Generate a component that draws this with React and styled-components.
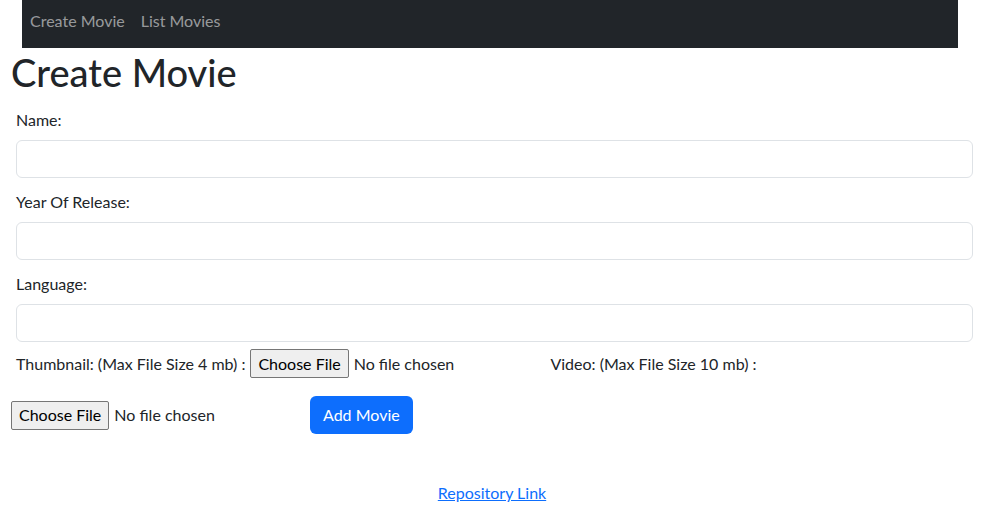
import React from 'react';
import styled, { createGlobalStyle } from 'styled-components';

const GlobalStyle = createGlobalStyle`
  body {
    margin: 0;
    background: #fff;
    color: #212529;
    font-family: Lato, "Liberation Sans", sans-serif;
    font-size: 16px;
    line-height: 1.5;
  }
  * {
    box-sizing: border-box;
  }
`;

function FilePicker({ spacing = 46 }) {
  return (
    <Picker $spacing={spacing}>
      <PickButton type="button">Choose File</PickButton>
      <span>No file chosen</span>
    </Picker>
  );
}

function App() {
  const fields = ['Name:', 'Year Of Release:', 'Language:'];

  return (
    <Page>
      <GlobalStyle />
      <Navbar>
        <NavLink href="#">Create Movie</NavLink>
        <NavLink href="#">List Movies</NavLink>
      </Navbar>
      <Title>Create Movie</Title>
      <Fields>
        {fields.map(label => (
          <Field key={label}>
            <label>{label}</label>
            <Input type="text" />
          </Field>
        ))}
      </Fields>
      <UploadRow>
        <span>Thumbnail: (Max File Size 4 mb) :</span>
        <FilePicker />
        <span>Video: (Max File Size 10 mb) :</span>
      </UploadRow>
      <ActionRow>
        <FilePicker spacing={50} />
        <SubmitButton type="button">Add Movie</SubmitButton>
      </ActionRow>
      <Footer>
        <a href="#">Repository Link</a>
      </Footer>
    </Page>
  );
}

const Page = styled.div`
  padding: 0 8px 0 11px;
`;

const Navbar = styled.nav`
  display: flex;
  align-items: flex-start;
  margin-left: 11px;
  width: 936px;
  height: 48px;
  padding-top: 9px;
  background-color: #212529;
`;

const NavLink = styled.a`
  padding: 0 8px;
  line-height: 24px;
  color: rgba(255, 255, 255, 0.55);
  text-decoration: none;
`;

const Title = styled.h1`
  margin: 1px 0 13px;
  font-size: 38px;
  font-weight: 500;
  line-height: 46px;
`;

const Fields = styled.div`
  padding-left: 5px;
`;

const Field = styled.div`
  margin-bottom: 12px;

  & label {
    display: block;
    margin-bottom: 8px;
    line-height: 24px;
  }
`;

const Input = styled.input`
  display: block;
  width: 100%;
  height: 38px;
  padding: 6px 12px;
  border: 1px solid #dee2e6;
  border-radius: 6px;
  font: inherit;
`;

const UploadRow = styled.div`
  display: flex;
  align-items: center;
  gap: 5px;
  margin-top: -5px;
  padding-left: 5px;
  height: 29px;
`;

const ActionRow = styled.div`
  display: flex;
  align-items: center;
  margin-top: 18px;
  height: 38px;
`;

const Picker = styled.div`
  display: flex;
  align-items: center;
  gap: 5px;
  width: 249px;
  margin-right: ${p => p.$spacing}px;
  white-space: nowrap;
`;

const PickButton = styled.button`
  height: 29px;
  padding: 0 7px;
  border: 1px solid #767676;
  border-radius: 2px;
  background-color: #efefef;
  color: #000;
  font: inherit;
`;

const SubmitButton = styled.button`
  height: 38px;
  padding: 0 13px;
  border: none;
  border-radius: 6px;
  background-color: #0d6efd;
  color: #fff;
  font: inherit;
`;

const Footer = styled.div`
  margin-top: 47px;
  text-align: center;
  line-height: 24px;

  & a {
    color: #0d6efd;
  }
`;

export default App;
